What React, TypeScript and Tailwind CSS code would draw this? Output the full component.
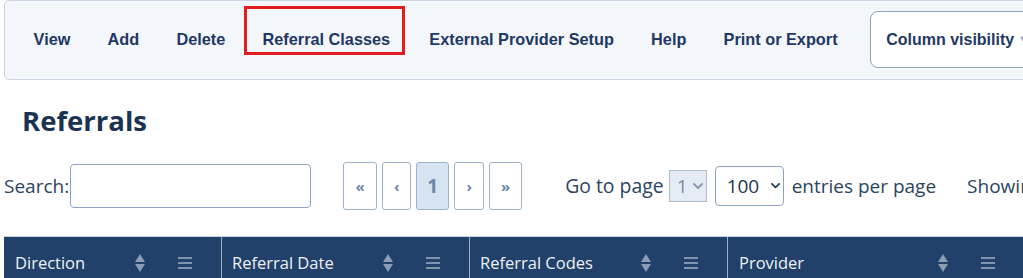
import React from 'react';

const navItems = ['View', 'Add', 'Delete', 'Referral Classes', 'External Provider Setup', 'Help', 'Print or Export'];

const columns = [
  { label: 'Direction', width: 'w-[218px]', pad: 'pl-[11px]' },
  { label: 'Referral Date', width: 'w-[248px]', pad: 'pl-[10px]' },
  { label: 'Referral Codes', width: 'w-[258px]', pad: 'pl-[10px]' },
  { label: 'Provider', width: 'w-[296px]', pad: 'pl-[11px]' },
];

const pager = [
  { t: '«', w: 'w-[34px]', active: false },
  { t: '‹', w: 'w-[29px]', active: false },
  { t: '1', w: 'w-[33px]', active: true },
  { t: '›', w: 'w-[30px]', active: false },
  { t: '»', w: 'w-[33px]', active: false },
];

const SortIcon = () => (
  <svg width="10" height="18" viewBox="0 0 10 18" className="shrink-0">
    <polygon points="5,0 10,8 0,8" fill="#8b9cb3" />
    <polygon points="0,10 10,10 5,18" fill="#8b9cb3" />
  </svg>
);

const MenuIcon = () => (
  <svg width="14" height="14" viewBox="0 0 14 14" className="shrink-0 ml-[33px]">
    <rect x="0" y="1" width="14" height="2" fill="#8194ad" />
    <rect x="0" y="6" width="14" height="2" fill="#8194ad" />
    <rect x="0" y="11" width="14" height="2" fill="#8194ad" />
  </svg>
);

const Chevron = ({ color, size = 10 }: { color: string; size?: number }) => (
  <svg width={size} height={size * 0.6} viewBox="0 0 10 6" fill="none">
    <path d="M1 1l4 4 4-4" stroke={color} strokeWidth="1.8" strokeLinecap="round" strokeLinejoin="round" />
  </svg>
);

export default function App() {
  const body = { fontFamily: '"Open Sans", "Noto Sans", sans-serif' };
  const arial = { fontFamily: '"Liberation Sans", Arial, sans-serif' };

  return (
    <div className="w-[1023px] h-[278px] overflow-hidden bg-white" style={body}>
      {/* Toolbar */}
      <div className="ml-[4px] w-[1040px] h-[80px] flex items-center pl-[10px] pb-[1px] bg-[#f3f6fb] border border-[#c9d5e3] rounded-[5px]">
        {navItems.map((item) => (
          <div
            key={item}
            className={`relative shrink-0 px-[18.6px] text-[16.3px] font-bold text-[#1f3864] whitespace-nowrap ${
              item === 'External Provider Setup' ? 'ml-[2px]' : ''
            }`}
            style={arial}
          >
            {item}
            {item === 'Referral Classes' && (
              <div className="absolute left-0 top-[-21px] w-[161px] h-[49px] border-[3px] border-[#e21d1d]" />
            )}
          </div>
        ))}
        <div
          className="ml-[14px] shrink-0 h-[57px] flex items-center pl-[15px] pr-[10px] bg-white border border-[#8ba3bf] rounded-[8px] text-[16px] font-bold text-[#1f3864] whitespace-nowrap"
          style={arial}
        >
          Column visibility
          <span className="ml-[4px] text-[11px] text-[#7d97b8]">▼</span>
        </div>
      </div>

      {/* Heading */}
      <h1 className="mt-[26px] pl-[22px] text-[27.5px] leading-[29px] font-bold text-[#1b3352]">Referrals</h1>

      {/* Controls row */}
      <div className="mt-[27px] h-[48px] flex items-center text-[19px] text-[#2b4460] whitespace-nowrap">
        <span className="shrink-0 pl-[4px]">Search:</span>
        <div className="shrink-0 ml-[1px] w-[241px] h-[44px] border border-[#8ba3bf] rounded-[4px] bg-white" />

        <div className="shrink-0 ml-[32px] flex gap-[5px] h-[48px]">
          {pager.map((b) => (
            <div
              key={b.t}
              className={`${b.w} h-[48px] flex items-center justify-center border border-[#9fb3cb] rounded-[3px] font-bold text-[#6b87ab] ${
                b.active ? 'bg-[#d6e4f2] text-[19px]' : 'bg-white text-[15px]'
              }`}
            >
              {b.t}
            </div>
          ))}
        </div>

        <span className="shrink-0 ml-[43px] text-[19.4px]">Go to page</span>
        <div className="shrink-0 ml-[5px] w-[38px] h-[32px] flex items-center pl-[7px] gap-[5px] bg-[#e5ebf3] border border-[#adbccf] text-[#7b8da4]">
          <span>1</span>
          <Chevron color="#8696ab" size={10} />
        </div>
        <div className="shrink-0 ml-[8px] w-[69px] h-[40px] flex items-center pl-[11px] gap-[12px] bg-white border border-[#8ba3bf] rounded-[4px] text-[#1e3350]">
          <span>100</span>
          <Chevron color="#1e3350" size={9} />
        </div>
        <span className="shrink-0 ml-[8px]">entries per page</span>
        <span className="shrink-0 ml-[31px]">Showing 1 to 100 of 245 entries</span>
      </div>

      {/* Table header */}
      <div className="mt-[26px] ml-[4px] w-[1020px] flex border-t border-[#c5d2e0] bg-[#21406a]">
        {columns.map((c, i) => (
          <div
            key={c.label}
            className={`${c.width} ${c.pad} h-[52px] shrink-0 flex items-center pr-[29px] ${
              i < columns.length - 1 ? 'border-r border-[#9fb0c5]' : ''
            }`}
          >
            <span className="flex-1 text-[16.5px] text-[#eef2f7] whitespace-nowrap">{c.label}</span>
            <SortIcon />
            <MenuIcon />
          </div>
        ))}
      </div>
    </div>
  );
}
